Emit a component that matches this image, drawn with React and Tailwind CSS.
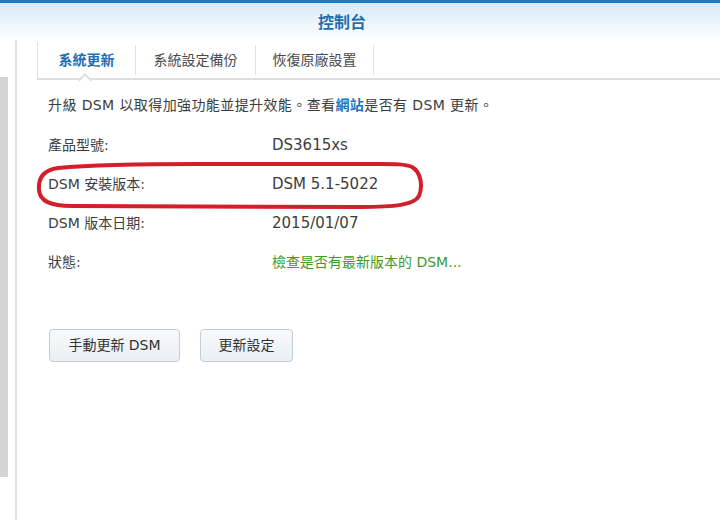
export default function App() {
  const font = { fontFamily: '"DejaVu Sans", "Noto Sans CJK TC", sans-serif' };

  const rows = [
    { label: "產品型號:", value: "DS3615xs" },
    { label: "DSM 安裝版本:", value: "DSM 5.1-5022" },
    { label: "DSM 版本日期:", value: "2015/01/07" },
    { label: "狀態:", value: "檢查是否有最新版本的 DSM...", status: true },
  ];

  return (
    <div
      className="relative w-[720px] h-[520px] overflow-hidden bg-white text-[#3d3d3d]"
      style={font}
    >
      {/* header */}
      <div className="h-[40px] border-t-[3px] border-[#1c7bc4] bg-gradient-to-b from-[#d6eaf9] to-white flex items-center justify-center pr-[36px]">
        <span className="text-[16px] font-bold text-[#1f6fae] pt-[2px]">控制台</span>
      </div>

      <div className="flex h-[480px]">
        {/* left rail */}
        <div className="w-[15px] pt-[37px]">
          <div className="w-[8px] h-[400px] bg-[#d4d4d7]"></div>
        </div>
        <div className="w-[2px] bg-[#e2e2e2]"></div>

        {/* main */}
        <div className="flex-1 pl-[20px] pt-[2px]">
          {/* tabs */}
          <div className="relative flex h-[38px] border-b-2 border-[#dedede] text-[14px]">
            <div className="w-[98px] flex items-center justify-center border-l border-[#e3e3e3] font-bold text-[#1f6fb3]">
              系統更新
            </div>
            <div className="w-[120px] my-[3px] flex items-center justify-center border-l border-[#e3e3e3] text-[#4a4a4a]">
              系統設定備份
            </div>
            <div className="w-[119px] my-[3px] flex items-center justify-center border-x border-[#e3e3e3] text-[#4a4a4a]">
              恢復原廠設置
            </div>
            <div className="absolute left-[43px] -bottom-[7px] w-[10px] h-[10px] rotate-45 bg-white border-l-2 border-t-2 border-[#dedede]"></div>
          </div>

          <div className="pl-[11px] text-[14px]">
            <div className="h-[46px] pt-[4px] flex items-center tracking-[0.4px]">
              升級 DSM 以取得加強功能並提升效能。查看
              <span className="font-bold text-[#1f72b8]">網站</span>
              是否有 DSM 更新。
            </div>

            {rows.map((r) => (
              <div key={r.label} className="h-[39px] flex items-center">
                <div className="w-[224px]">{r.label}</div>
                <div className={r.status ? "text-[#3f9a2c]" : "text-[15px]"}>{r.value}</div>
              </div>
            ))}

            <div className="flex gap-[20px] mt-[47px] ml-[1px]">
              <button className="w-[131px] h-[33px] rounded-[4px] border border-[#c7ccd2] bg-gradient-to-b from-[#f8fafc] to-[#eaeff4] text-[14px] text-[#333]">
                手動更新 DSM
              </button>
              <button className="w-[93px] h-[33px] rounded-[4px] border border-[#c7ccd2] bg-gradient-to-b from-[#f8fafc] to-[#eaeff4] text-[14px] text-[#333]">
                更新設定
              </button>
            </div>
          </div>
        </div>
      </div>

      {/* hand-drawn red mark */}
      <svg
        className="absolute left-0 top-0 pointer-events-none"
        width="720"
        height="520"
        viewBox="0 0 720 520"
      >
        <path
          d="M58 168 C44 170 38 178 39 190 C40 201 50 206 72 206 L360 207 C395 207 414 205 419 196 C423 186 421 172 412 167 C405 164 395 164 380 164 L200 164 C140 164 90 165 58 168"
          fill="none"
          stroke="#d21f2b"
          strokeWidth="4"
          strokeLinecap="round"
        />
      </svg>
    </div>
  );
}
